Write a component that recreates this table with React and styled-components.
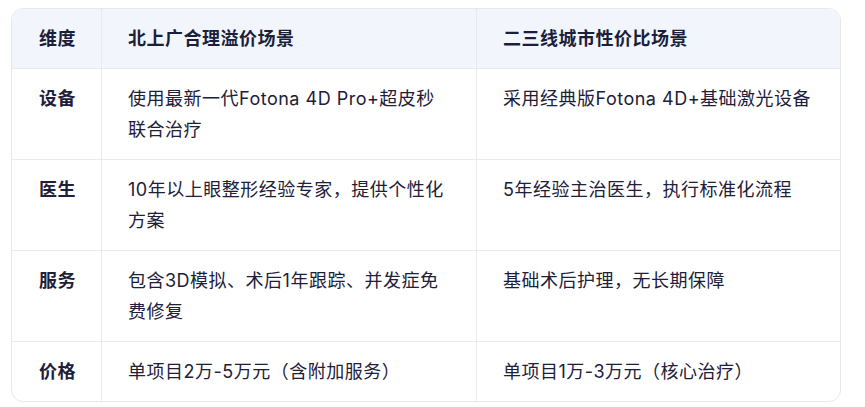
import React from "react";
import styled, { createGlobalStyle } from "styled-components";

const GlobalStyle = createGlobalStyle`
  html, body {
    margin: 0;
    padding: 0;
    background: #ffffff;
  }
  body {
    font-family: Inter, "Noto Sans CJK SC", sans-serif;
  }
`;

const Page = styled.div`
  padding: 8px 26px 0 11px;
`;

const TableWrap = styled.div`
  border: 1px solid #e6e8ee;
  border-radius: 12px;
  overflow: hidden;
  width: 828px;
`;

const Table = styled.div`
  display: grid;
  grid-template-columns: 89px 375px 1fr;
`;

const HeadCell = styled.div`
  background: #f3f5fc;
  color: #1b1f3b;
  font-size: 18px;
  font-weight: 700;
  letter-spacing: 0.5px;
  line-height: 31px;
  white-space: nowrap;
  padding: 14px ${(p) => p.pr}px 14px ${(p) => (p.first ? "27px" : "26px")};
  border-left: ${(p) => (p.first ? "none" : "1px solid #e8eaf0")};
  border-bottom: 1px solid #e8eaf0;
`;

const Cell = styled.div`
  color: #1d2038;
  font-size: 18px;
  font-weight: ${(p) => (p.label ? 700 : 400)};
  letter-spacing: 0.5px;
  line-height: 31px;
  white-space: ${(p) => (p.label ? "nowrap" : "normal")};
  padding: 14px ${(p) => p.pr}px 14px ${(p) => (p.label ? "27px" : "26px")};
  border-left: ${(p) => (p.label ? "none" : "1px solid #e8eaf0")};
  border-bottom: ${(p) => (p.last ? "none" : "1px solid #e8eaf0")};
`;

const headers = ["维度", "北上广合理溢价场景", "二三线城市性价比场景"];
const padRight = [20, 30, 12];

const rows = [
  ["设备", "使用最新一代Fotona 4D Pro+超皮秒联合治疗", "采用经典版Fotona 4D+基础激光设备"],
  ["医生", "10年以上眼整形经验专家，提供个性化方案", "5年经验主治医生，执行标准化流程"],
  ["服务", "包含3D模拟、术后1年跟踪、并发症免费修复", "基础术后护理，无长期保障"],
  ["价格", "单项目2万-5万元（含附加服务）", "单项目1万-3万元（核心治疗）"],
];

export default function App() {
  return (
    <Page>
      <GlobalStyle />
      <TableWrap>
        <Table>
          {headers.map((h, i) => (
            <HeadCell key={h} first={i === 0} pr={padRight[i]}>
              {h}
            </HeadCell>
          ))}
          {rows.map((r, ri) =>
            r.map((c, ci) => (
              <Cell
                key={ri + "-" + ci}
                label={ci === 0}
                last={ri === rows.length - 1}
                pr={padRight[ci]}
              >
                {c}
              </Cell>
            ))
          )}
        </Table>
      </TableWrap>
    </Page>
  );
}
